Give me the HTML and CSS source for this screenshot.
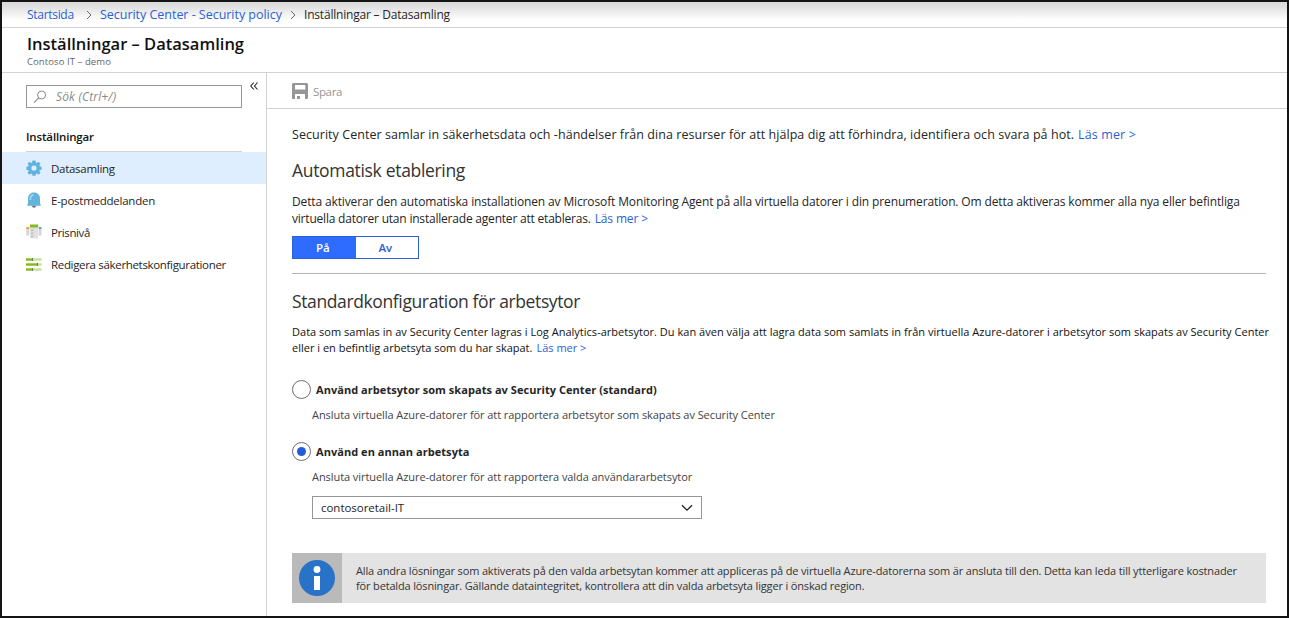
FILE: index.html
```html
<!DOCTYPE html>
<html lang="sv">
<head>
<meta charset="utf-8">
<title>Inställningar – Datasamling</title>
<link rel="stylesheet" href="styles.css">
</head>
<body>
<div class="portal">
  <nav class="breadcrumb">
    <a class="crumb-home" href="#">Startsida</a>
    <svg class="crumb-sep" width="6" height="10" viewBox="0 0 6 10"><path d="M1 1l4 4-4 4" fill="none" stroke="#666" stroke-width="1"/></svg>
    <a class="crumb-policy" href="#">Security Center - Security policy</a>
    <svg class="crumb-sep" width="6" height="10" viewBox="0 0 6 10"><path d="M1 1l4 4-4 4" fill="none" stroke="#666" stroke-width="1"/></svg>
    <span class="crumb-current">Inställningar – Datasamling</span>
  </nav>
  <header class="blade-header">
    <h1>Inställningar – Datasamling</h1>
    <p>Contoso IT – demo</p>
  </header>
  <div class="blade-body">
    <aside class="sidebar">
      <div class="search-row">
        <div class="search">
          <svg width="14" height="14" viewBox="0 0 14 14"><circle cx="8.600" cy="5" r="4" fill="none" stroke="#8a8a8a"/><path d="M5.800 7.900L1 12.600" stroke="#8a8a8a" stroke-width="1.100"/></svg>
          <span class="search-text">Sök (Ctrl+/)</span>
        </div>
        <svg class="collapse" width="8" height="8" viewBox="0 0 8 8"><path d="M3.800.5L.8 4l3 3.500M7.500.5l-3 3.500 3 3.500" fill="none" stroke="#222" stroke-width="1.100"/></svg>
      </div>
      <h2>Inställningar</h2>
      <ul class="menu">
        <li class="active">
          <svg width="16" height="16" viewBox="0 0 16 16"><path fill="#5fb3dc" fill-rule="evenodd" d="M6.500.5h3l.4 2 .9.4 1.700-1.200 2 2-1.200 1.700.4.9 1.900.4v3l-1.900.4-.4.9 1.200 1.700-2 2-1.700-1.200-.9.400-.4 1.900h-3l-.4-1.900-.9-.4-1.700 1.200-2-2 1.200-1.700-.4-.9L.4 9.700v-3l1.900-.4.4-.9L1.500 3.700l2-2 1.700 1.200.9-.4zM8 5.500a2.600 2.600 0 1 0 0 5.200 2.600 2.600 0 0 0 0-5.200z"/></svg>
          <span class="item-collect">Datasamling</span>
        </li>
        <li>
          <svg width="16" height="16" viewBox="0 0 16 16"><path fill="#63b4dc" d="M2 6.500C2 3 4.400.5 8 .5S14 3 14 6.500v5l.7 1v1.300H1.300v-1.300l.7-1z"/><path fill="#a6d6ec" d="M3.500 6.500C3.500 4 5 2.200 7.500 2v1.500C6 4 5.200 5 5.200 6.600V8H3.500z"/><path fill="#6f6f6f" d="M6 13.800h4c0 1.200-.9 1.900-2 1.900s-2-.7-2-1.900z"/></svg>
          <span class="item-mail">E-postmeddelanden</span>
        </li>
        <li>
          <svg width="16" height="16" viewBox="0 0 16 16"><path fill="#d6d6d6" d="M.3 4h3v7.500h-3zM12.700 4h2.800v7.500h-2.800z"/><path fill="#f8a13a" d="M.3 3h3v2h-3z"/><path fill="#59a9d9" d="M12.700 3h2.800v2h-2.800z"/><path fill="#e1e1e1" d="M4 3h8.200v11.500H4z"/><path fill="#86b91b" d="M4 .5h8.200v3H4z"/><path d="M5.300 6.200l.8.600 1.100-1.300M5.300 9.200l.8.600 1.100-1.300M5.300 12.200l.8.600 1.100-1.300" fill="none" stroke="#8a8a8a" stroke-width=".7"/></svg>
          <span class="item-price">Prisnivå</span>
        </li>
        <li>
          <svg width="16" height="16" viewBox="0 0 16 16"><path fill="#c8df9c" d="M6 2h9.500v3H6zM10 7h5.500v3H10zM6 12h9.500v3H6z"/><path fill="#86b91b" d="M0 2h6v3H0zM0 7h11v3H0zM0 12h6v3H0z"/><path stroke="#fff" stroke-width=".8" stroke-opacity=".5" d="M0 2.200h15.500M0 4.800h15.500M0 7.200h15.500M0 9.800h15.500M0 12.200h15.500M0 14.800h15.500"/><path fill="#6d7d4e" d="M6 2h1v3H6zM11 7h1v3h-1zM6 12h1v3H6z"/></svg>
          <span class="item-config">Redigera säkerhetskonfigurationer</span>
        </li>
      </ul>
    </aside>
    <main class="content">
      <div class="toolbar">
        <svg width="16" height="16" viewBox="0 0 16 16"><path fill="#969696" fill-rule="evenodd" d="M1 0h14l1 1v14l-1 1h-2v-5H3v5H0V1zM3 2v4.500h10.300V2zM5 13h3v3H5z"/></svg>
        <span class="save-text">Spara</span>
      </div>
      <div class="sections">
        <p class="intro"><span class="intro-text">Security Center samlar in säkerhetsdata och -händelser från dina resurser för att hjälpa dig att förhindra, identifiera och svara på hot.</span><a href="#">Läs mer &gt;</a></p>
        <h3 class="h-auto">Automatisk etablering</h3>
        <p class="auto">
          <span class="auto-first">Detta aktiverar den automatiska installationen av Microsoft Monitoring Agent på alla virtuella datorer i din prenumeration. Om detta aktiveras kommer alla nya eller befintliga</span><br>
          <span class="auto-second">virtuella datorer utan installerade agenter att etableras.</span><a href="#">Läs mer &gt;</a>
        </p>
        <div class="toggle"><b class="on">På</b><b class="off">Av</b></div>
        <h3 class="h-config">Standardkonfiguration för arbetsytor</h3>
        <p class="config">
          <span class="config-first">Data som samlas in av Security Center lagras i Log Analytics-arbetsytor. Du kan även välja att lagra data som samlats in från virtuella Azure-datorer i arbetsytor som skapats av Security Center</span><br>
          <span>eller i en befintlig arbetsyta som du har skapat.</span><a href="#">Läs mer &gt;</a>
        </p>
        <div class="option"><i class="radio"></i><b>Använd arbetsytor som skapats av Security Center (standard)</b></div>
        <p class="hint">Ansluta virtuella Azure-datorer för att rapportera arbetsytor som skapats av Security Center</p>
        <div class="option"><i class="radio checked"></i><b>Använd en annan arbetsyta</b></div>
        <p class="hint">Ansluta virtuella Azure-datorer för att rapportera valda användararbetsytor</p>
        <div class="select"><span>contosoretail-IT</span><svg width="12" height="8" viewBox="0 0 12 8"><path d="M1 1.200l5 5 5-5" fill="none" stroke="#222" stroke-width="1.300"/></svg></div>
        <div class="info">
          <div class="info-icon"><svg width="36" height="36" viewBox="0 0 36 36"><circle cx="18" cy="18" r="18" fill="#2872c8"/><circle cx="18" cy="9.500" r="3.400" fill="#fff"/><path d="M15 16h6v14h-6z" fill="#fff"/></svg></div>
          <p>
            <span>Alla andra lösningar som aktiverats på den valda arbetsytan kommer att appliceras på de virtuella Azure-datorerna som är ansluta till den. Detta kan leda till ytterligare kostnader</span><br>
            <span>för betalda lösningar. Gällande dataintegritet, kontrollera att din valda arbetsyta ligger i önskad region.</span>
          </p>
        </div>
      </div>
    </main>
  </div>
</div>
</body>
</html>
```
FILE: styles.css
```css
* { box-sizing: border-box; }
body { margin: 0; font: 11.5px/16px "Open Sans", "Noto Sans", sans-serif; color: #252525; background: #fff; }
h1, h2, h3, p, ul { margin: 0; padding: 0; font-weight: 400; white-space: nowrap; }
a { color: #2a5fd6; text-decoration: none; }
svg { display: block; flex: none; }
span, a { white-space: nowrap; }
.portal { width: 1289px; height: 618px; border: 2px solid #141414; display: flex; flex-direction: column; overflow: hidden; }
.breadcrumb { height: 26px; flex: none; border-bottom: 1px solid #d2d2d2; padding-left: 25px; display: flex; align-items: center; background: linear-gradient(#dadada, #dfdfdf 4px, #fff 18px); font-size: 12px; }
.crumb-home { width: 47px; letter-spacing: -0.3px; }
.crumb-policy { width: 182px; font-size: 12.5px; letter-spacing: -0.03px; }
.crumb-current { letter-spacing: -0.2px; }
.crumb-sep { margin: 0 8px 0 12px; }
.crumb-policy + .crumb-sep { margin: 0 8px; }
.blade-header { height: 45px; flex: none; border-bottom: 1px solid #d2d2d2; padding: 5px 0 0 25px; }
h1 { font-size: 16.5px; line-height: 22px; font-weight: 600; color: #111; }
.blade-header p { font-size: 9.5px; line-height: 14px; letter-spacing: 0.08px; color: #666; }
.blade-body { display: flex; flex: 1; min-height: 0; }
.sidebar { width: 265px; flex: none; border-right: 1px solid #d2d2d2; }
.search-row { display: flex; padding: 12px 0 0 24px; gap: 8px; }
.search { width: 216px; height: 23px; border: 1px solid #969696; display: flex; align-items: center; padding-left: 6px; gap: 9px; color: #8a8a8a; font-style: italic; font-size: 12px; }
.search-text { letter-spacing: 0.15px; }
.collapse { margin-top: -3px; }
h2 { margin: 18px 0 0 24px; width: 216px; height: 26px; border-bottom: 1px solid #d2d2d2; font-size: 11.5px; line-height: 22px; letter-spacing: -0.15px; font-weight: 600; color: #111; }
.menu { list-style: none; }
.menu li { height: 32px; padding-left: 24px; display: flex; align-items: center; gap: 9px; }
.menu span { padding-top: 2px; }
.menu .active { background: #dfeeff; }
.item-collect { letter-spacing: -0.28px; }
.item-mail { letter-spacing: -0.245px; }
.item-price { letter-spacing: -0.4px; }
.item-config { letter-spacing: -0.327px; }
.content { flex: 1; min-width: 0; }
.toolbar { height: 36px; border-bottom: 1px solid #d2d2d2; display: flex; align-items: center; padding-left: 25px; gap: 5px; color: #969696; }
.save-text { padding-top: 2px; letter-spacing: -0.36px; }
.sections { padding-left: 25px; }
.intro { font-size: 12.5px; line-height: 18px; padding-top: 17px; letter-spacing: 0.053px; }
.intro a { letter-spacing: 0.13px; }
.intro a, .auto a, .config a { margin-left: 4px; }
h3 { font-size: 17.5px; line-height: 24px; letter-spacing: -0.38px; color: #333; }
.h-auto { margin-top: 14px; letter-spacing: -0.32px; }
.auto { font-size: 12px; line-height: 17px; margin-top: 11px; }
.auto-first { letter-spacing: -0.132px; }
.auto-second { letter-spacing: -0.205px; }
.auto a { letter-spacing: -0.15px; }
.toggle { width: 127px; height: 23px; margin-top: 9px; border: 1px solid #2a5fd6; display: flex; line-height: 21px; text-align: center; font-weight: 600; }
.toggle b { flex: 1; font-weight: 600; padding-right: 3px; }
.toggle .on { background: #2e6bff; color: #fff; }
.toggle .off { color: #2a5fd6; }
.h-config { width: 974px; margin-top: 14px; padding-top: 15px; border-top: 1px solid #b4b4b4; }
.config { margin-top: 11px; font-size: 11px; color: #111; }
.config-first { letter-spacing: 0.018px; }
.option { display: flex; align-items: center; height: 20px; gap: 5px; margin-top: 23px; }
.option b { font-weight: 700; font-size: 11px; letter-spacing: 0.05px; padding-top: 1px; }
.radio { width: 19px; height: 19px; border: 1px solid #6e6e6e; border-radius: 50%; display: grid; place-items: center; }
.checked::after { content: ""; width: 9px; height: 9px; border-radius: 50%; background: #215cdb; }
.hint { margin: 8px 0 0 20px; font-size: 11px; letter-spacing: -0.065px; color: #444; }
.hint + .option { margin-top: 18px; }
.select { margin: 11px 0 0 20px; width: 390px; height: 23px; border: 1px solid #969696; display: flex; align-items: center; justify-content: space-between; padding: 0 8px; letter-spacing: -0.03px; }
.info { width: 974px; height: 50px; margin-top: 34px; background: #e3e3e3; display: flex; font-size: 11px; line-height: 15px; letter-spacing: -0.155px; color: #333; }
.info-icon { width: 50px; background: #bababa; display: grid; place-items: center; }
.info p { padding: 10px 0 0 14px; }
```
